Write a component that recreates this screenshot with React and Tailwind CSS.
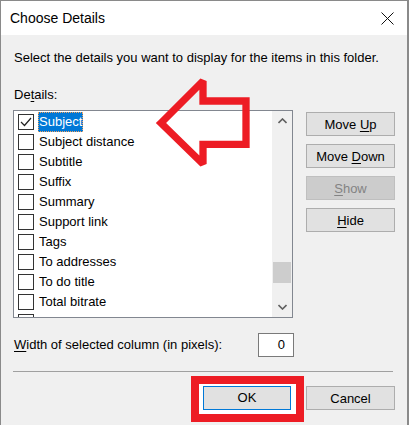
import React from 'react';

const items = [
  'Subject',
  'Subject distance',
  'Subtitle',
  'Suffix',
  'Summary',
  'Support link',
  'Tags',
  'To addresses',
  'To do title',
  'Total bitrate',
  '',
];

const Checkbox = ({ checked }) => (
  <div className="w-[16px] h-[16px] border border-[#333333] bg-white flex items-center justify-center shrink-0">
    {checked && (
      <svg width="14" height="14" viewBox="0 0 14 14">
        <polyline points="2,7 5.5,10.5 12,3" fill="none" stroke="#222" strokeWidth="1.2" />
      </svg>
    )}
  </div>
);

const Btn = ({ children, disabled, className = '' }) => (
  <button
    className={`h-[24px] w-[89px] border text-[13px] leading-none ${
      disabled ? 'bg-[#cccccc] border-[#bfbfbf] text-[#838383]' : 'bg-[#e1e1e1] border-[#adadad] text-black'
    } ${className}`}
  >
    {children}
  </button>
);

const Key = ({ children }) => <span className="underline underline-offset-2">{children}</span>;

export default function App() {
  return (
    <div className="relative w-[409px] h-[425px] overflow-hidden bg-[#f0f0f0] border-t border-l border-r-2 border-[#8a8a8a] font-['Liberation_Sans',Arial,sans-serif] text-[13px] text-black">
      {/* Title bar */}
      <div className="h-[34px] bg-white flex items-center justify-between pl-[9px] pr-[13px]">
        <span className="text-[14px]">Choose Details</span>
        <svg width="13" height="13" viewBox="0 0 13 13">
          <path d="M0.5 0.5 L12.5 12.5 M12.5 0.5 L0.5 12.5" stroke="#111" strokeWidth="1" />
        </svg>
      </div>

      <div className="pl-[12px] pr-[12px] pt-[13px]">
        <p className="leading-[20px] pl-[1px]">Select the details you want to display for the items in this folder.</p>
        <p className="leading-[20px] mt-[17px] pl-[1px]">
          De<Key>t</Key>ails:
        </p>

        <div className="flex gap-[13px] mt-[5px]">
          {/* List box */}
          <div className="w-[281px] h-[208px] border border-[#828790] bg-white flex overflow-hidden">
            <div className="flex-1 pt-[1px] pl-[4px]">
              {items.map((it, i) => (
                <div key={i} className="h-[20px] flex items-center gap-[4px]">
                  <Checkbox checked={i === 0} />
                  {it && (
                    <span
                      className={`leading-[20px] px-[1px] ${
                        i === 0 ? 'bg-[#0078d7] text-white outline outline-1 outline-dotted outline-[#f4a460] -outline-offset-1' : ''
                      }`}
                    >
                      {it}
                    </span>
                  )}
                </div>
              ))}
            </div>
            {/* Scrollbar */}
            <div className="w-[20px] bg-[#f0f0f0] flex flex-col">
              <div className="h-[20px] flex items-center justify-center">
                <svg width="9" height="6" viewBox="0 0 9 6">
                  <polyline points="0.5,5 4.5,1 8.5,5" fill="none" stroke="#606060" strokeWidth="1.6" />
                </svg>
              </div>
              <div className="flex-1 px-[1px]">
                <div className="mt-[131px] h-[21px] bg-[#cdcdcd]" />
              </div>
              <div className="h-[20px] flex items-center justify-center">
                <svg width="9" height="6" viewBox="0 0 9 6">
                  <polyline points="0.5,1 4.5,5 8.5,1" fill="none" stroke="#606060" strokeWidth="1.6" />
                </svg>
              </div>
            </div>
          </div>

          {/* Side buttons */}
          <div className="flex flex-col gap-[8px] pt-[2px]">
            <Btn>
              Move <Key>U</Key>p
            </Btn>
            <Btn>
              Move <Key>D</Key>own
            </Btn>
            <Btn disabled>
              <Key>S</Key>how
            </Btn>
            <Btn>
              <Key>H</Key>ide
            </Btn>
          </div>
        </div>

        {/* Width row */}
        <div className="flex items-center justify-between w-[281px] mt-[15px] pl-[1px]">
          <span>
            <Key>W</Key>idth of selected column (in pixels):
          </span>
          <div className="w-[36px] h-[24px] border border-[#7a7a7a] bg-white flex items-center justify-end pr-[8px]">0</div>
        </div>

        <div className="mt-[14px] mr-[2px] h-[1px] bg-[#a0a0a0]" />

        {/* Footer */}
        <div className="flex justify-end gap-[15px] mt-[14px]">
          <div className="relative">
            <div className="absolute -left-[12px] -right-[13px] -top-[10px] -bottom-[12px] border-[8px] border-[#ed1c24] bg-white" />
            <button className="relative h-[24px] w-[88px] border border-[#0078d7] bg-[#e1e1e1] text-[13px]">OK</button>
          </div>
          <Btn>Cancel</Btn>
        </div>
      </div>

      {/* Red arrow annotation */}
      <svg className="absolute left-0 top-0 pointer-events-none" width="409" height="425">
        <polygon
          points="160,122 202,80 202,100 245,100 245,143.3 202,143.3 202,163"
          fill="none"
          stroke="#ed1c24"
          strokeWidth="7.3"
          strokeLinejoin="miter"
          strokeMiterlimit="2"
        />
      </svg>
    </div>
  );
}
